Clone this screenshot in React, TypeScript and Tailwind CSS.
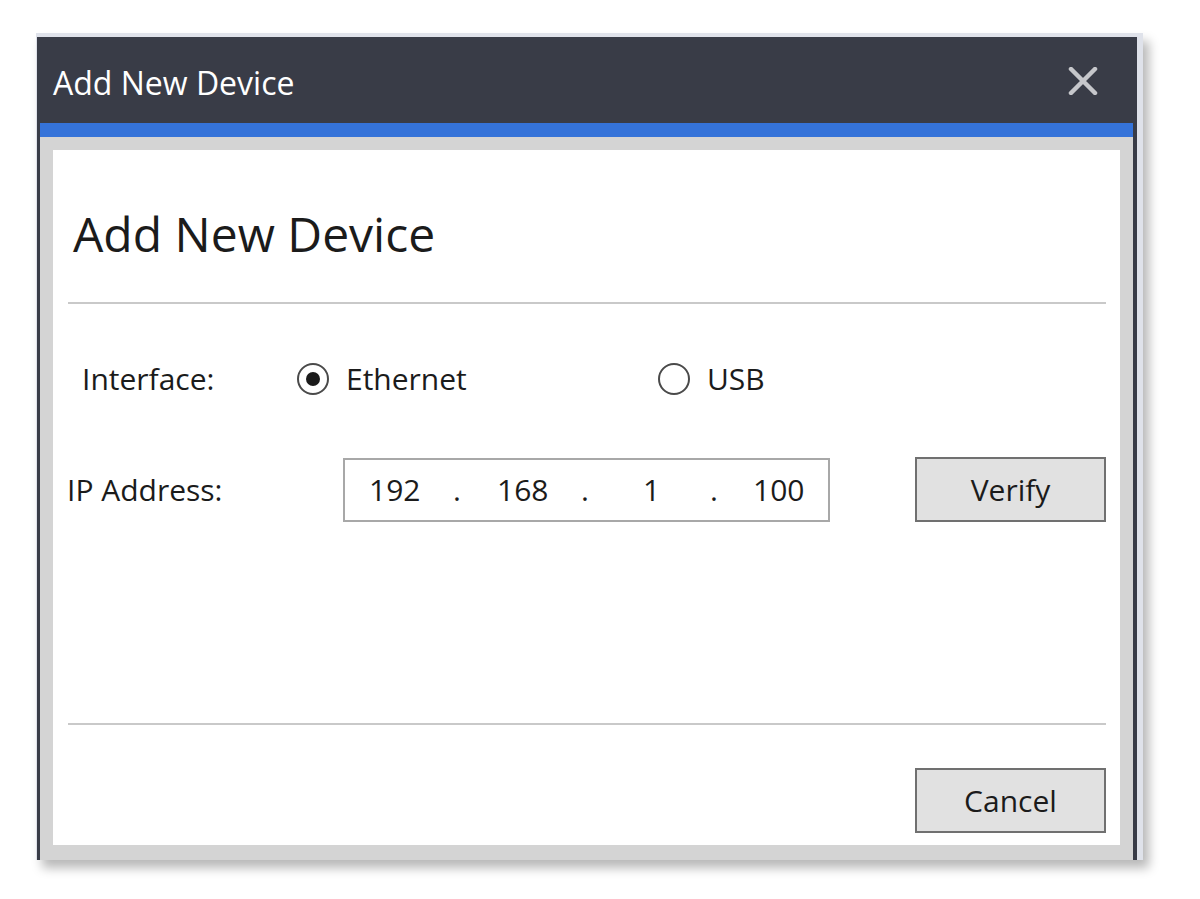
import React from 'react';

const font = { fontFamily: '"Open Sans", "Noto Sans", sans-serif' };

const Radio: React.FC<{ checked?: boolean; label: string }> = ({ checked, label }) => (
  <div className="flex items-center">
    <span className="flex h-[32px] w-[32px] items-center justify-center rounded-full border-[2px] border-[#4a4a4a]">
      {checked && <span className="h-[14px] w-[14px] rounded-full bg-[#1b1b1b]" />}
    </span>
    <span className="ml-[17px] text-[30px] leading-none text-[#1b1b1b]">{label}</span>
  </div>
);

const DialogButton: React.FC<{ label: string }> = ({ label }) => (
  <button className="flex h-[65px] w-[191px] items-center justify-center border-[2px] border-[#707070] bg-[#e1e1e1] text-[30px] leading-none text-[#1b1b1b]">
    {label}
  </button>
);

export default function App() {
  return (
    <div className="min-h-[899px] w-[1200px] bg-white pt-[33px] pl-[36px]" style={font}>
      <div className="w-[1107px] border-t-[4px] border-l border-r-[6px] border-[#dfe2ea] shadow-[6px_8px_10px_rgba(0,0,0,0.28)]">
        <div className="border-l-[3px] border-r-[4px] border-[#393c47]">
          {/* Title bar */}
          <div className="flex h-[86px] items-center justify-between bg-[#393c47] pt-[6px] pl-[13px] pr-[35px]">
            <span className="text-[32px] leading-none text-white">Add New Device</span>
            <svg width="30" height="28" viewBox="0 0 30 28" className="mt-[-4px]">
              <path d="M3 2 L27 26 M27 2 L3 26" stroke="#c6c7cb" strokeWidth="4.5" strokeLinecap="round" />
            </svg>
          </div>
          <div className="h-[14px] bg-[#3573d9]" />

          {/* Frame */}
          <div className="bg-[#d4d4d4] px-[13px] pt-[13px] pb-[15px]">
            <div className="flex h-[695px] flex-col bg-white">
              <h1 className="mt-[54px] ml-[20px] text-[48px] leading-[60px] font-normal text-[#1b1b1b]">
                Add New Device
              </h1>
              <div className="mt-[38px] ml-[15px] mr-[14px] h-[2px] bg-[#c9c9c9]" />

              {/* Interface row */}
              <div className="mt-[59px] flex items-center">
                <span className="ml-[29px] w-[215px] text-[30px] leading-none text-[#1b1b1b]">Interface:</span>
                <div className="w-[361px]">
                  <Radio checked label="Ethernet" />
                </div>
                <Radio label="USB" />
              </div>

              {/* IP row */}
              <div className="mt-[62px] flex items-center">
                <span className="ml-[14px] w-[276px] text-[30px] leading-none text-[#1b1b1b]">IP Address:</span>
                <div className="flex h-[64px] w-[487px] items-center border-[2px] border-[#a8a8a8] text-[30px] leading-none text-[#1b1b1b]">
                  <span className="ml-[24px] w-[52px]">192</span>
                  <span className="ml-[32px] w-[10px]">.</span>
                  <span className="ml-[34px] w-[52px]">168</span>
                  <span className="ml-[32px] w-[10px]">.</span>
                  <span className="ml-[52px] w-[20px]">1</span>
                  <span className="ml-[47px] w-[10px]">.</span>
                  <span className="ml-[33px]">100</span>
                </div>
                <div className="ml-[85px]">
                  <DialogButton label="Verify" />
                </div>
              </div>

              <div className="mt-[201px] ml-[15px] mr-[14px] h-[2px] bg-[#c9c9c9]" />

              <div className="mt-[43px] flex justify-end pr-[14px]">
                <DialogButton label="Cancel" />
              </div>
            </div>
          </div>
        </div>
      </div>
    </div>
  );
}
